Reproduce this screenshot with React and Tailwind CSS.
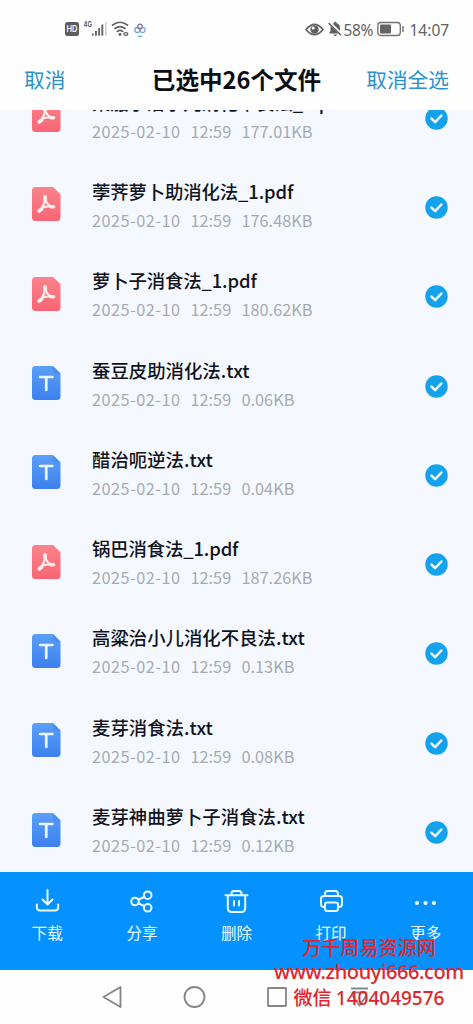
import React from "react";

const rows = [
  { name: "莱菔子治小儿消化不良法_1.pdf", size: "177.01KB" },
  { name: "荸荠萝卜助消化法_1.pdf", size: "176.48KB" },
  { name: "萝卜子消食法_1.pdf", size: "180.62KB" },
  { name: "蚕豆皮助消化法.txt", size: "0.06KB" },
  { name: "醋治呃逆法.txt", size: "0.04KB" },
  { name: "锅巴消食法_1.pdf", size: "187.26KB" },
  { name: "高粱治小儿消化不良法.txt", size: "0.13KB" },
  { name: "麦芽消食法.txt", size: "0.08KB" },
  { name: "麦芽神曲萝卜子消食法.txt", size: "0.12KB" },
];

function FileIcon({ pdf }) {
  return (
    <svg width="28.5" height="34" viewBox="0 0 28 34" preserveAspectRatio="none" className="shrink-0">
      <defs>
        <linearGradient id="pdfFill" x1="0" y1="0" x2="0" y2="1">
          <stop offset="0" stopColor="#fa838b" />
          <stop offset="1" stopColor="#f96575" />
        </linearGradient>
        <linearGradient id="txtFill" x1="0" y1="0" x2="0" y2="1">
          <stop offset="0" stopColor="#5b9ff8" />
          <stop offset="1" stopColor="#3d80ee" />
        </linearGradient>
      </defs>
      <path d="M3.5 0H20.5L28 7.5V30.5Q28 34 24.5 34H3.5Q0 34 0 30.5V3.5Q0 0 3.5 0Z" fill={pdf ? "url(#pdfFill)" : "url(#txtFill)"} />
      <path d="M20.5 0L28 7.5H23Q20.5 7.5 20.5 5Z" fill={pdf ? "#f97e87" : "#4a8ef0"} />
      {pdf ? (
        <g fill="none" stroke="#fff0ed" strokeLinecap="round" strokeLinejoin="round">
          <path d="M12.7 10C13 14.5 15 18.5 20.8 20" strokeWidth="2.1" />
          <path d="M12.9 10C12.9 15.5 11 20.5 7 24" strokeWidth="2.1" />
          <path d="M7 23.8C9 20.5 14 18.8 21 19.8" strokeWidth="2.1" />
          <path d="M12.8 9.8V12.5M7 24L9.3 22.3M18.8 19.8H21.2" strokeWidth="3.6" />
        </g>
      ) : (
        <path d="M8 11H20M14 11V24" stroke="#edf6ff" strokeWidth="2.7" strokeLinecap="round" />
      )}
    </svg>
  );
}

function Check() {
  return (
    <svg width="23" height="23" viewBox="0 0 23 23" className="mt-[6px] shrink-0">
      <circle cx="11.5" cy="11.5" r="11.2" fill="#14a2ec" />
      <path d="M6.5 11.7L10.1 15.1L16.4 8.5" fill="none" stroke="#f2fbff" strokeWidth="2.5" strokeLinecap="round" strokeLinejoin="round" />
    </svg>
  );
}

function Row({ name, size }) {
  const pdf = name.endsWith("pdf");
  return (
    <div className="flex h-[89.3px] shrink-0 items-center pl-[32px] pr-[25px]">
      <FileIcon pdf={pdf} />
      <div className="ml-[31.5px] mt-[2px] flex-1">
        <div className={`h-[30px] whitespace-nowrap text-[18.4px] font-medium leading-[28px] text-[#10131c] ${pdf ? "tracking-[-0.13px]" : ""}`}>{name}</div>
        <div className="grid h-[27px] grid-cols-[98.5px_51px_1fr] whitespace-nowrap text-[16.3px] leading-[26px] text-[#a6aab1]">
          <span className="tracking-[0.5px]">2025-02-10</span>
          <span>12:59</span>
          <span>{size}</span>
        </div>
      </div>
      <Check />
    </div>
  );
}

const tools = [
  {
    label: "下载",
    icon: <path d="M12.5 1V15M7.5 10.5L12.5 15.5L17.5 10.5M1.8 15.5V18Q1.8 21.5 5.3 21.5H19.7Q23.2 21.5 23.2 18V15.5" />,
  },
  {
    label: "分享",
    icon: (
      <>
        <circle cx="6" cy="12.5" r="3.8" />
        <circle cx="18.7" cy="6.2" r="3.8" />
        <circle cx="18.7" cy="18.8" r="3.8" />
        <path d="M9.4 10.7L15.3 8M9.4 14.3L15.3 17" />
      </>
    ),
  },
  {
    label: "删除",
    icon: <path d="M1.5 6.2H23.5M7.5 6V4.5Q7.5 2 10 2H15Q17.5 2 17.5 4.5V6M3.8 6.5V19Q3.8 23 7.8 23H17.2Q21.2 23 21.2 19V6.5M10 12V16.5M15 12V16.5" />,
  },
  {
    label: "打印",
    icon: (
      <>
        <path d="M6 7V4.8Q6 2 8.8 2H16.2Q19 2 19 4.8V7M5.5 18H5Q2 18 2 15V10Q2 7 5 7H20Q23 7 23 10V15Q23 18 20 18H19.5" />
        <path d="M8.3 13.5H16.7Q19 13.5 19 15.8V19.5Q19 22 16.5 22H8.5Q6 22 6 19.5V15.8Q6 13.5 8.3 13.5Z" />
      </>
    ),
  },
  {
    label: "更多",
    icon: (
      <g fill="#e9fbff" stroke="none">
        <circle cx="4" cy="14" r="2.1" />
        <circle cx="12.5" cy="14" r="2.1" />
        <circle cx="21" cy="14" r="2.1" />
      </g>
    ),
  },
];

function StatusBar() {
  return (
    <div className="flex h-[58px] items-center pl-[64px] pr-[22px] font-['Inter'] text-[#626262]">
      <svg width="84" height="24" viewBox="0 0 84 24" className="shrink-0">
        <rect x="1" y="5" width="14" height="14" rx="2.5" fill="#5c5c5c" />
        <text x="8" y="15.4" fontSize="9.5" fontWeight="600" fill="#fff" textAnchor="middle" textLength="11" lengthAdjust="spacingAndGlyphs">HD</text>
        <text x="19.5" y="10" fontSize="8" fontWeight="600" fill="#555" textLength="8.5" lengthAdjust="spacingAndGlyphs">4G</text>
        <g fill="#666">
          <rect x="28" y="16.5" width="1.7" height="2.2" />
          <rect x="31" y="14" width="1.9" height="4.7" />
          <rect x="34.2" y="11" width="1.9" height="7.7" />
          <rect x="37.4" y="7.5" width="1.9" height="11.2" />
          <rect x="41" y="5" width="1.7" height="13.7" fill="#d0d0d0" />
        </g>
        <g fill="none" stroke="#606060" strokeWidth="1.7" strokeLinecap="round">
          <path d="M48.5 8.2Q56 2.3 63.5 8.2M51 11.5Q56 7.6 61 11.5M53.3 14.4Q56 12.4 58.7 14.4" />
          <ellipse cx="61.8" cy="17" rx="2" ry="1.3" strokeWidth="1.2" />
        </g>
        <circle cx="56" cy="17.5" r="1.4" fill="#606060" />
        <g fill="none" strokeWidth="1.3">
          <circle cx="76" cy="9.5" r="2.3" stroke="#7179b9" />
          <circle cx="73.4" cy="13" r="2.5" stroke="#67a5dc" />
          <circle cx="78.6" cy="13" r="2.5" stroke="#85a9da" />
          <path d="M74.3 11L76 12.5L77.8 11" stroke="#c25c80" />
          <path d="M74 19.3H78" stroke="#62aee0" />
        </g>
      </svg>
      <svg width="40" height="24" viewBox="0 0 40 24" className="ml-auto shrink-0">
        <path d="M1 12.5Q9.5 2.1 18 12.5Q9.5 22.9 1 12.5Z" fill="none" stroke="#606060" strokeWidth="1.7" />
        <circle cx="9.5" cy="12.5" r="4.2" fill="#606060" />
        <circle cx="8.1" cy="10.9" r="1.5" fill="#fff" />
        <path d="M24 16.5L25.5 14V10.5Q26 6.8 29.3 6V4.8H31.3V6Q35 7 35 10.5V14L36.5 16.5ZM28.5 17.5H32Q31.7 19 30.3 19Q28.8 19 28.5 17.5Z" fill="#606060" />
        <path d="M24 5L37.5 18.5" stroke="#fff" strokeWidth="3" />
        <path d="M23.7 6L36 18.3" stroke="#606060" strokeWidth="1.5" />
      </svg>
      <span className="-ml-px mt-[2px] w-[32px] whitespace-nowrap font-['Noto_Sans'] text-[15.5px] leading-[24px] tracking-[-0.4px]">58%</span>
      <svg width="29" height="24" viewBox="0 0 29 24" className="shrink-0">
        <rect x="1.8" y="5.5" width="22.5" height="13" rx="3" fill="none" stroke="#707070" strokeWidth="1.3" />
        <rect x="4" y="7.5" width="11" height="9" rx="1" fill="#646464" />
        <path d="M27 9V15" stroke="#707070" strokeWidth="1.4" />
      </svg>
      <span className="ml-[5px] mt-[2px] w-[41.5px] whitespace-nowrap font-['Noto_Sans'] text-[15.5px] leading-[24px]">14:07</span>
    </div>
  );
}

export default function App() {
  return (
    <div className="relative flex h-[1024px] w-[473px] flex-col overflow-hidden bg-[#fefefe] font-['Noto_Sans_CJK_SC',sans-serif]">
      <StatusBar />
      <header className="grid h-[52px] shrink-0 grid-cols-[1fr_auto_1fr] items-center whitespace-nowrap pl-[24px] pr-[24px] text-[20.7px] leading-[44px] text-[#2a91cb]">
        <span className="-mt-[11px]">取消</span>
        <h1 className="-mt-[10px] text-[23.6px] font-bold text-[#0b0e16]">已选中26个文件</h1>
        <span className="-mt-[11px] text-right">取消全选</span>
      </header>
      <main className="flex h-[762px] shrink-0 flex-col overflow-hidden bg-[#f5f9ff]">
        <div className="-mt-[39.5px] flex flex-col">
          {rows.map((row) => (
            <Row key={row.name} {...row} />
          ))}
        </div>
      </main>
      <nav className="flex h-[98px] shrink-0 bg-[#0592ff] text-[#e9fbff]">
        {tools.map((tool) => (
          <div key={tool.label} className="flex flex-1 flex-col items-center pt-[17px]">
            <svg width="25" height="25" viewBox="0 0 25 25" fill="none" stroke="#e9fbff" strokeWidth="2" strokeLinecap="round" strokeLinejoin="round">
              {tool.icon}
            </svg>
            <span className="mt-[5px] text-[15.5px] leading-[26px]">{tool.label}</span>
          </div>
        ))}
      </nav>
      <footer className="flex h-[54px] items-center pl-[101px]">
        <svg width="272" height="30" viewBox="0 0 272 30" fill="none" stroke="#858585" strokeWidth="1.8" strokeLinejoin="round">
          <path d="M2.5 15L19.5 5V25Z" />
          <circle cx="93.5" cy="15" r="10" />
          <rect x="167" y="6" width="18" height="18" rx="0.5" />
          <path d="M250 6.5H267M251.5 10.5H265.5V13.5L258.5 23.5L251.5 13.5Z" />
        </svg>
      </footer>
      <div className="absolute left-[274px] top-[935px] flex w-[190px] flex-col items-center whitespace-nowrap font-medium text-[#e0242b]">
        <div className="text-[19.1px] leading-[24px]">万千周易资源网</div>
        <div className="font-['Noto_Sans'] text-[20px] leading-[26px] tracking-[-0.4px]">www.zhouyi666.com</div>
        <div className="text-[19px] leading-[24px]">
          微信 <span className="font-['Noto_Sans']">1404049576</span>
        </div>
      </div>
    </div>
  );
}
